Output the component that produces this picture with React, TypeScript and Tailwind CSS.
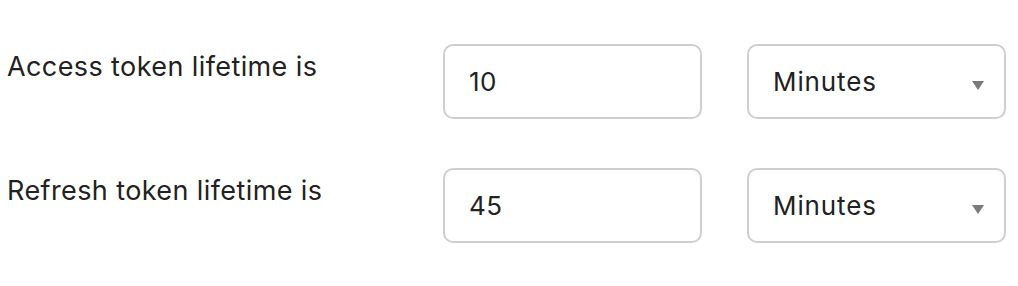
import { useState } from 'react'

const rows = [
	{ label: 'Access token lifetime is', value: '10', unit: 'Minutes' },
	{ label: 'Refresh token lifetime is', value: '45', unit: 'Minutes' },
]

function Row({ label, value, unit }: { label: string; value: string; unit: string }) {
	const [v, setV] = useState(value)
	return (
		<div className="flex items-start">
			<div className="w-[436px] pt-[5px] text-[27px] leading-[36px] tracking-[0.4px] text-[#222]">{label}</div>
			<input
				value={v}
				onChange={(e) => setV(e.target.value)}
				className="w-[259px] h-[75px] rounded-[10px] border-2 border-[#cfcfcf] px-[24px] text-[26px] tracking-[0.5px] text-[#222] outline-none"
			/>
			<div className="relative ml-[45px] w-[259px] h-[75px] rounded-[10px] border-2 border-[#cfcfcf] flex items-center pl-[24px] text-[26px] tracking-[0.9px] text-[#222]">
				<span>{unit}</span>
				<svg className="absolute right-[20px] top-[35px]" width="12" height="9" viewBox="0 0 12 9">
					<path d="M0 0 H12 L6 9 Z" fill="#7a7a7a" />
				</svg>
			</div>
		</div>
	)
}

export default function App() {
	return (
		<main className="w-[1018px] h-[286px] bg-white pl-[7px] pt-[44px] flex flex-col gap-[49px]" style={{ fontFamily: 'Inter, sans-serif' }}>
			{rows.map((r) => (
				<Row key={r.label} {...r} />
			))}
		</main>
	)
}
